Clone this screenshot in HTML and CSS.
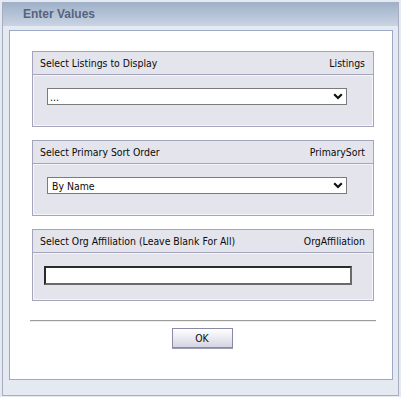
FILE: index.html
```html
<!DOCTYPE html>
<html>
<head>
<meta charset="utf-8">
<link rel="stylesheet" href="styles.css">
</head>
<body>
<div class="window">
  <div class="titlebar">Enter Values</div>
  <div class="panel">
    <div class="section">
      <div class="sec-head"><span>Select Listings to Display</span><span>Listings</span></div>
      <div class="sec-body">
        <div class="select"><span>...</span><svg class="chev" width="10" height="7" viewBox="0 0 10 7"><path d="M1.2 1.2 L5 5 L8.8 1.2" fill="none" stroke="#111" stroke-width="2.2"/></svg></div>
      </div>
    </div>
    <div class="section">
      <div class="sec-head"><span>Select Primary Sort Order</span><span>PrimarySort</span></div>
      <div class="sec-body">
        <div class="select"><span class="val">By Name</span><svg class="chev" width="10" height="7" viewBox="0 0 10 7"><path d="M1.2 1.2 L5 5 L8.8 1.2" fill="none" stroke="#111" stroke-width="2.2"/></svg></div>
      </div>
    </div>
    <div class="section sec3">
      <div class="sec-head"><span>Select Org Affiliation (Leave Blank For All)</span><span>OrgAffiliation</span></div>
      <div class="sec-body">
        <div class="textbox"></div>
      </div>
    </div>
    <div class="sep"></div>
    <div class="btnrow"><div class="btn">OK</div></div>
  </div>
</div>
</body>
</html>
```
FILE: styles.css
```css
html, body { margin: 0; padding: 0; }
body {
  width: 401px; height: 397px;
  background: #e4e9f2;
  font-family: "DejaVu Sans Condensed", "DejaVu Sans", sans-serif;
  font-size: 10.4px;
  color: #0a0a0a;
  overflow: hidden;
}
.window {
  box-sizing: border-box;
  margin: 2px 0 0 2px;
  width: 397px; height: 394px;
  border: 1px solid #a6aec0;
  border-top: none;
  display: flex; flex-direction: column;
}
.titlebar {
  height: 24px;
  padding-left: 20px;
  background: linear-gradient(#9eb0c7, #c9d4e3);
  font-family: "Liberation Sans", sans-serif;
  font-weight: bold;
  font-size: 12px;
  color: #56647f;
  line-height: 24px;
}
.panel {
  box-sizing: border-box;
  margin: 4px 0 0 6px;
  width: 384px; height: 350px;
  background: #fff;
  border: 1px solid #9ba9c6;
  padding: 20px 18px 0 22px;
  display: flex; flex-direction: column; gap: 13px;
}
.section {
  border: 1px solid #a4a4bc;
  background: #e4e4ec;
  height: 76px;
  box-sizing: border-box;
  display: flex; flex-direction: column;
  flex-shrink: 0;
}
.sec3 { height: 72px; }
.sec-head {
  height: 22px;
  flex-shrink: 0;
  border-bottom: 1px solid #a4a4bc;
  display: flex; justify-content: space-between; align-items: center;
  padding: 0 8px 0 7px;
}
.sec-body {
  flex: 1;
  border: 1px solid #f6f6fa;
  padding: 12px 0 0 13px;
}
.select {
  box-sizing: border-box;
  width: 300px; height: 17px;
  background: #fff;
  border: 1px solid #7b7b7b;
  display: flex; align-items: center; justify-content: space-between;
  padding: 0 3px 0 2px;
}
.select .val { padding-left: 2px; }
.textbox {
  box-sizing: border-box;
  margin: 0 0 0 -3px;
  width: 308px; height: 19px;
  background: #fff;
  border: 2px solid #2b2b2b;
  border-right-color: #6a6a6a;
  border-bottom-color: #6a6a6a;
}
.sep {
  margin: 6px 0 0 -2px;
  width: 346px;
  height: 1px;
  flex-shrink: 0;
  background: #9c9c9c;
  border-bottom: 1px solid #ececec;
}
.btnrow { display: flex; justify-content: center; margin-top: -7px; padding-right: 2px; }
.btn {
  box-sizing: border-box;
  width: 61px; height: 20px;
  border: 1px solid #8a8aa6;
  background: linear-gradient(#ffffff, #d5d5e3);
  box-shadow: 0 1px 0 #9a9ab4;
  text-align: center;
  line-height: 18px;
}
```
